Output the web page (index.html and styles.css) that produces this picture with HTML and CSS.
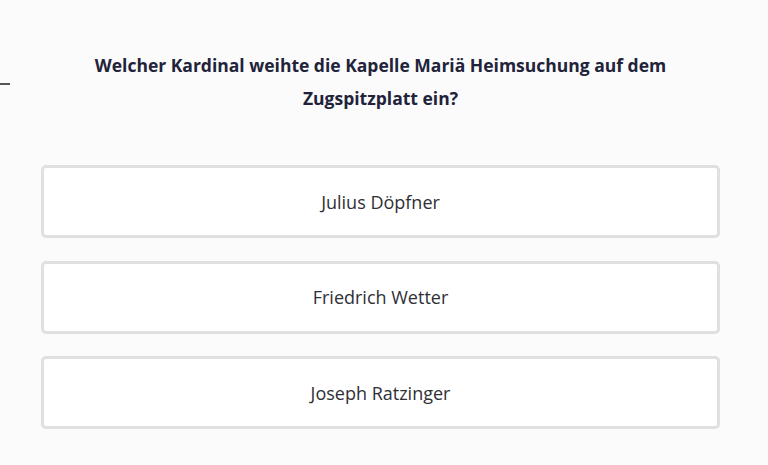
FILE: index.html
```html
<!DOCTYPE html>
<html lang="de">
<head>
<meta charset="utf-8">
<link rel="stylesheet" href="styles.css">
</head>
<body>
<div class="dash"></div>
<main class="quiz">
  <h1 class="question">Welcher Kardinal weihte die Kapelle Mariä Heimsuchung auf dem Zugspitzplatt ein?</h1>
  <div class="answers">
    <button class="answer">Julius Döpfner</button>
    <button class="answer">Friedrich Wetter</button>
    <button class="answer">Joseph Ratzinger</button>
  </div>
</main>
</body>
</html>
```
FILE: styles.css
```css
html, body {
  margin: 0;
  padding: 0;
  background: #fafbfa;
  font-family: "Open Sans", "Noto Sans", sans-serif;
}
body {
  position: relative;
  height: 465px;
  overflow: hidden;
}
.dash {
  position: absolute;
  left: 0;
  top: 83px;
  width: 10px;
  height: 2px;
  background: #555;
}
.quiz {
  padding: 49px 48px 0 41px;
}
.question {
  margin: 0 auto;
  width: 620px;
  text-align: center;
  font-size: 17.5px;
  line-height: 33px;
  font-weight: 700;
  color: #22233a;
}
.answers {
  margin-top: 50px;
  display: flex;
  flex-direction: column;
  gap: 22.6px;
}
.answer {
  display: block;
  width: 679px;
  height: 73px;
  background: #fff;
  border: 3px solid #e0e0e2;
  border-radius: 5px;
  font-family: inherit;
  font-size: 18px;
  color: #2f2f36;
  text-align: center;
  padding: 0;
}
```
